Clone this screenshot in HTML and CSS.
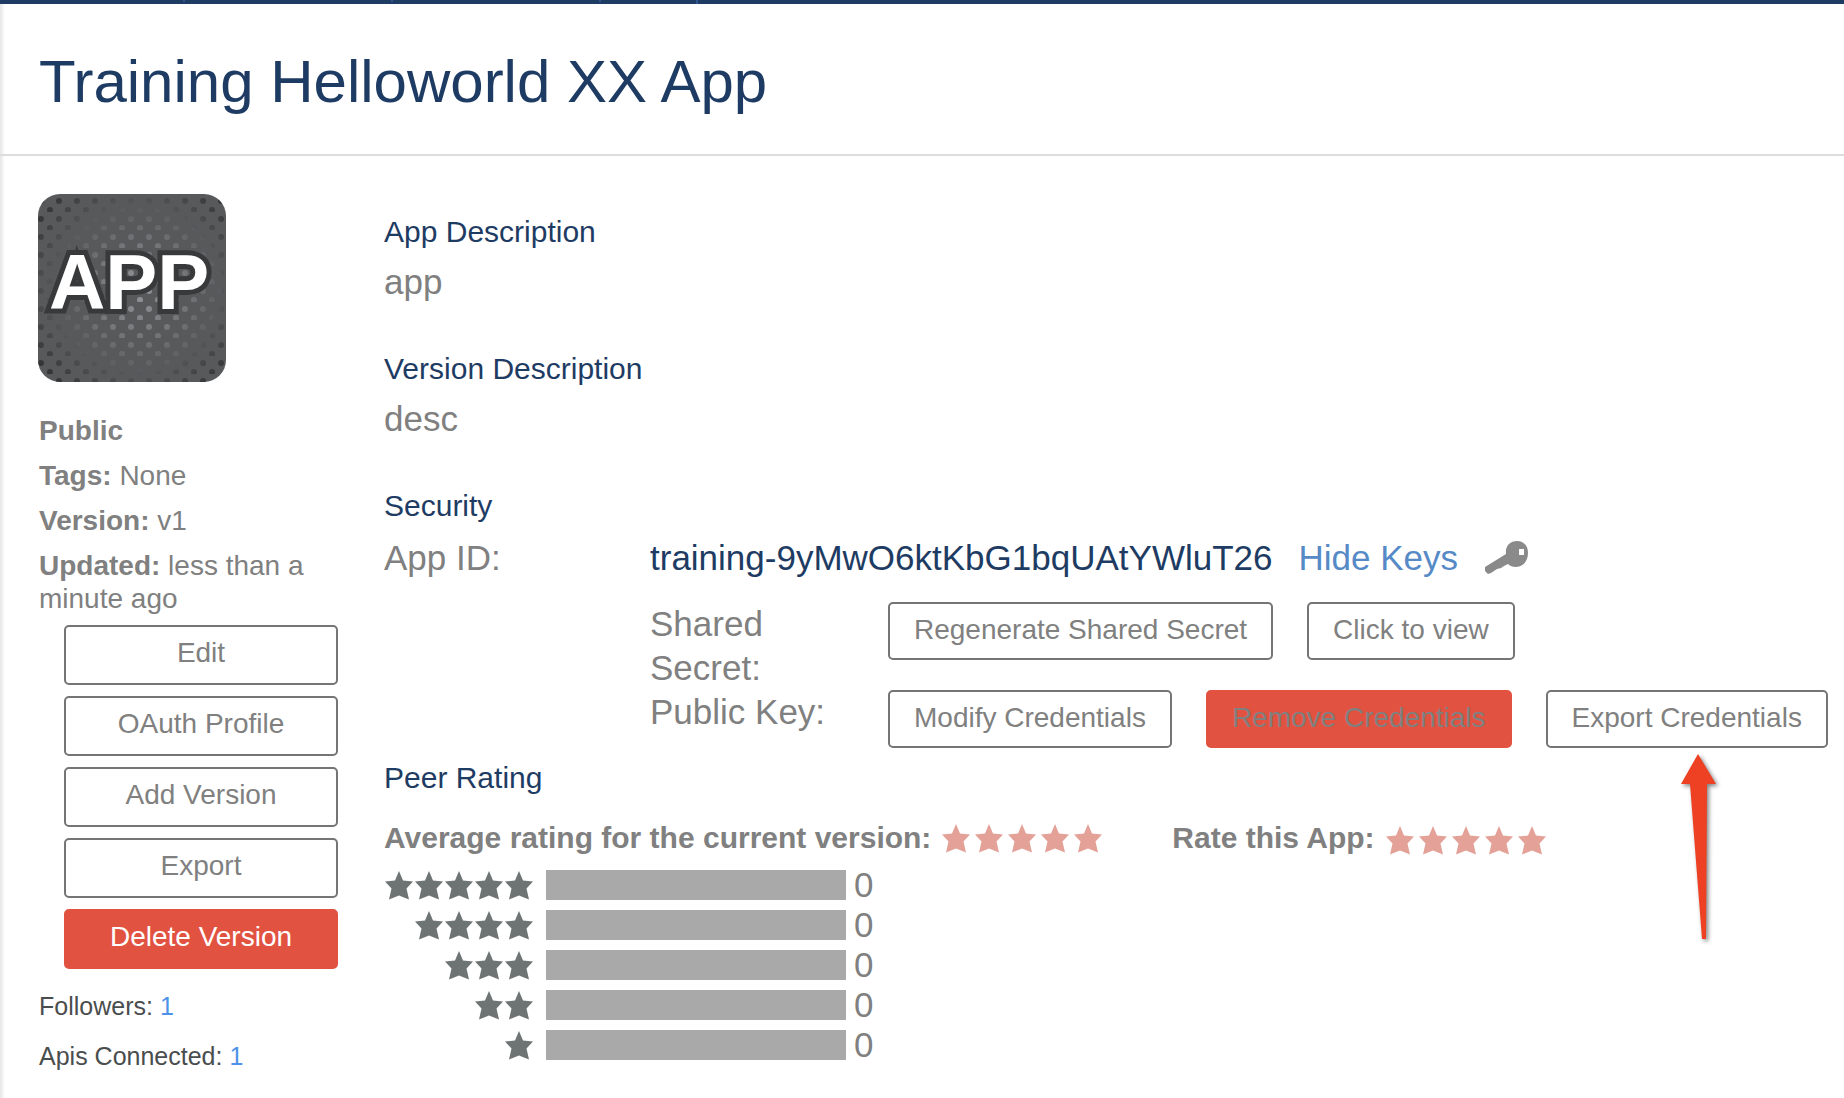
FILE: index.html
```html
<!DOCTYPE html>
<html lang="en">
<head>
<meta charset="utf-8">
<title>Training Helloworld XX App</title>
<link rel="stylesheet" href="styles.css">
</head>
<body>
<svg class="symbols" aria-hidden="true">
  <symbol id="star" viewBox="0 0 30 30">
    <path d="M15 1 L19 10.500 L29 11.500 L22.500 18.500 L25 29.500 L15 25.500 L5 29.500 L7.500 18.500 L1 11.500 L11 10.500 Z"/>
  </symbol>
</svg>
<nav class="topbar" aria-label="Main">
  <span class="tab tab-first"></span><span class="tab"></span><span class="tab"></span><span class="tab tab-last"></span>
</nav>
<header class="page-head"><h1>Training Helloworld XX App</h1></header>
<div class="content">
  <aside class="sidebar">
    <svg class="app-icon" viewBox="0 0 188 188" role="img" aria-label="App icon">
      <defs>
        <pattern id="lightDots" width="18" height="18" patternUnits="userSpaceOnUse">
          <g fill="#96979a"><circle cx="3" cy="7" r="3"/><circle cx="12" cy="16" r="3"/></g>
        </pattern>
        <pattern id="darkDots" width="18" height="18" patternUnits="userSpaceOnUse">
          <g fill="#2c2d2f"><circle cx="3" cy="7" r="3"/><circle cx="12" cy="16" r="3"/></g>
        </pattern>
        <radialGradient id="glow" gradientUnits="userSpaceOnUse" cx="102" cy="96" r="88">
          <stop offset="0" stop-color="#fff"/><stop offset="1" stop-color="#000"/>
        </radialGradient>
        <radialGradient id="edge" gradientUnits="userSpaceOnUse" cx="98" cy="94" r="130">
          <stop offset="0.620" stop-color="#000"/><stop offset="1" stop-color="#fff"/>
        </radialGradient>
        <mask id="glowMask"><rect width="188" height="188" fill="url(#glow)"/></mask>
        <mask id="edgeMask"><rect width="188" height="188" fill="url(#edge)"/></mask>
        <clipPath id="tile"><rect width="188" height="188" rx="22"/></clipPath>
      </defs>
      <g clip-path="url(#tile)">
        <rect width="188" height="188" fill="#58595b"/>
        <rect width="188" height="188" fill="url(#lightDots)" mask="url(#glowMask)"/>
        <rect width="188" height="188" fill="url(#darkDots)" mask="url(#edgeMask)"/>
      </g>
      <text class="app-icon-text" x="11" y="115">APP</text>
    </svg>
    <div class="facts">
      <p><strong>Public</strong></p>
      <p><strong>Tags:</strong> None</p>
      <p><strong>Version:</strong> v1</p>
      <p><strong>Updated:</strong> less than a minute ago</p>
    </div>
    <div class="actions">
      <button class="btn" type="button">Edit</button>
      <button class="btn" type="button">OAuth Profile</button>
      <button class="btn" type="button">Add Version</button>
      <button class="btn" type="button">Export</button>
      <button class="btn btn-danger btn-light" type="button">Delete Version</button>
    </div>
    <div class="counts">
      <p>Followers: <a href="#followers">1</a></p>
      <p>Apis Connected: <a href="#apis">1</a></p>
    </div>
  </aside>
  <main class="details">
    <section>
      <h2>App Description</h2>
      <p>app</p>
    </section>
    <section>
      <h2>Version Description</h2>
      <p>desc</p>
    </section>
    <section class="security">
      <h2>Security</h2>
      <div class="security-grid">
        <div>App ID:</div>
        <div class="keys">
          <div class="app-id">
            <span class="id-value">training-9yMwO6ktKbG1bqUAtYWluT26</span>
            <a class="hide-keys" href="#keys">Hide Keys</a>
            <svg class="key" viewBox="0 0 46 34" aria-hidden="true">
              <path fill-rule="evenodd" d="M33 0 C40 0 44 5 44 12 C44 20 39 26 32 26 C28 26 26 25 24 23 L20 25 L17 27 L13 28 L10 30 L7 32 L4 33 L1 30 L1 26 L22 13 C21 5 26 0 33 0 Z M35 8 V14 H40 V8 Z"/>
            </svg>
          </div>
          <div class="key-row">
            <div class="key-label">Shared Secret:</div>
            <div class="key-buttons">
              <button class="btn" type="button">Regenerate Shared Secret</button>
              <button class="btn" type="button">Click to view</button>
            </div>
          </div>
          <div class="key-row">
            <div class="key-label">Public Key:</div>
            <div class="key-buttons">
              <button class="btn" type="button">Modify Credentials</button>
              <button class="btn btn-danger" type="button">Remove Credentials</button>
              <div class="pointed">
                <button class="btn" type="button">Export Credentials</button>
                <svg class="arrow" viewBox="0 0 44 192" aria-hidden="true">
                  <path d="M20 2 L38 32 H29 L28 187 H24 L12 32 H3 Z"/>
                </svg>
              </div>
            </div>
          </div>
        </div>
      </div>
    </section>
    <section class="rating">
      <h2>Peer Rating</h2>
      <div class="rating-row">
        <div class="rating-item">
          <strong>Average rating for the current version:</strong>
          <span class="stars stars-pink" role="img" aria-label="No rating">
            <svg><use href="#star"/></svg><svg><use href="#star"/></svg><svg><use href="#star"/></svg><svg><use href="#star"/></svg><svg><use href="#star"/></svg>
          </span>
        </div>
        <div class="rating-item">
          <strong>Rate this App:</strong>
          <span class="stars stars-pink stars-rate">
            <button type="button" aria-label="1 star"><svg><use href="#star"/></svg></button>
            <button type="button" aria-label="2 stars"><svg><use href="#star"/></svg></button>
            <button type="button" aria-label="3 stars"><svg><use href="#star"/></svg></button>
            <button type="button" aria-label="4 stars"><svg><use href="#star"/></svg></button>
            <button type="button" aria-label="5 stars"><svg><use href="#star"/></svg></button>
          </span>
        </div>
      </div>
      <ul class="histogram">
        <li><span class="stars"><svg><use href="#star"/></svg><svg><use href="#star"/></svg><svg><use href="#star"/></svg><svg><use href="#star"/></svg><svg><use href="#star"/></svg></span><span class="bar"></span><span>0</span></li>
        <li><span class="stars"><svg><use href="#star"/></svg><svg><use href="#star"/></svg><svg><use href="#star"/></svg><svg><use href="#star"/></svg></span><span class="bar"></span><span>0</span></li>
        <li><span class="stars"><svg><use href="#star"/></svg><svg><use href="#star"/></svg><svg><use href="#star"/></svg></span><span class="bar"></span><span>0</span></li>
        <li><span class="stars"><svg><use href="#star"/></svg><svg><use href="#star"/></svg></span><span class="bar"></span><span>0</span></li>
        <li><span class="stars"><svg><use href="#star"/></svg></span><span class="bar"></span><span>0</span></li>
      </ul>
    </section>
  </main>
</div>
</body>
</html>
```
FILE: styles.css
```css
* { box-sizing: border-box; }

body {
  margin: 0;
  background: linear-gradient(to right, #e6e6e6, #fff 5px);
  color: #808080;
  font-family: "Liberation Sans", Arial, sans-serif;
  font-size: 28px;
}

h1, h2, p, ul { margin: 0; padding: 0; font-weight: 400; }
a { text-decoration: none; }
.symbols { display: none; }

.topbar { display: flex; height: 4px; background: #1e3c63; }
.tab { width: 208px; height: 2px; border-right: 2px solid #2f5690; }
.tab-first { width: 185px; }
.tab-last { width: 97px; height: 4px; }

.page-head { padding: 43px 39px 37px; border-bottom: 2px solid #ddd; }
h1 { color: #1e3c63; font-size: 60px; line-height: 70px; }

.content { display: flex; gap: 46px; padding: 38px 18px 20px 38px; }

.sidebar { flex: 0 0 300px; }
.app-icon { display: block; width: 188px; height: 188px; }
.app-icon-text {
  fill: #fff;
  stroke: #38393b;
  stroke-width: 10px;
  paint-order: stroke;
  font-size: 78px;
  font-weight: 700;
}
.facts { display: grid; gap: 12px; margin-top: 32px; padding-left: 1px; line-height: 33px; }

.btn {
  height: 58px;
  padding: 0 24px 2px;
  border: 2px solid #757575;
  border-radius: 5px;
  background: #fff;
  color: #808080;
  font: inherit;
  line-height: 32px;
  white-space: nowrap;
}
.btn-danger { border-color: #e25241; background: #e25241; }
.btn-light { color: #fff; }
.actions { display: grid; gap: 11px; margin: 10px 0 22px 26px; }
.actions .btn { height: 60px; padding-bottom: 4px; }

.counts { display: grid; gap: 20px; padding-left: 1px; color: #4a4d4e; font-size: 25px; line-height: 30px; }
.counts a { color: #4b92e8; }

.details { flex: 1; min-width: 0; padding-top: 20px; font-size: 35px; line-height: 44px; }
.details section { margin-bottom: 47px; }
h2 { margin-bottom: 10px; color: #1e3c63; font-size: 30px; line-height: 36px; }

.details .security { margin-bottom: 12px; }
.security h2 { margin-bottom: 12px; }
.security-grid { display: grid; grid-template-columns: 266px 1fr; }
.app-id { display: flex; gap: 26px; margin-bottom: 22px; }
.id-value { color: #1e3c63; }
.hide-keys { color: #568ac7; }
.key { width: 46px; height: 34px; margin-top: 5px; fill: #8a8a8a; }
.key-row { display: grid; grid-template-columns: 238px 1fr; }
.key-label { padding-right: 36px; }
.key-buttons { display: flex; gap: 34px; font-size: 28px; }
.pointed { position: relative; height: 58px; }
.pointed .btn { display: block; }
.arrow {
  position: absolute;
  top: 62px;
  left: 132px;
  width: 44px;
  height: 192px;
  fill: #ee4023;
  filter: drop-shadow(2px 2px 2px rgba(0, 0, 0, 0.5));
}

.details .rating { margin-bottom: 0; }
.rating h2 { margin-bottom: 24px; }
.rating-row { display: flex; gap: 69px; font-size: 30px; line-height: 36px; }
.rating-item { display: flex; gap: 10px; }
.stars { display: flex; fill: #6e7374; }
.stars svg { display: block; width: 30px; height: 30px; }
.stars-pink { gap: 3px; padding-top: 3px; fill: #e3a198; }
.stars-rate button { padding: 0; border: 0; background: none; fill: inherit; }

.histogram { display: grid; gap: 10px; margin-top: 14px; line-height: 30px; list-style: none; }
.histogram li { display: grid; grid-template-columns: 150px 300px auto; column-gap: 12px; justify-content: start; }
.histogram .stars { justify-content: flex-end; }
.bar { height: 30px; background: #a9a9a9; }
.bar + span { margin-left: -4px; }
```
